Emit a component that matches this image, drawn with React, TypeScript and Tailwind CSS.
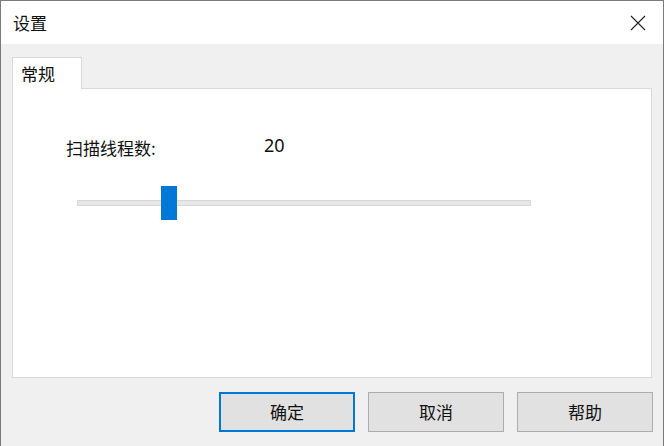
import React from "react";

export default function App() {
  const font = { fontFamily: '"Noto Sans CJK SC", "Noto Sans", sans-serif' };
  return (
    <div className="w-[665px] h-[446px] bg-white overflow-hidden" style={font}>
      <div className="w-[664px] h-[446px] border border-b-0 border-[#7a7a7a] flex flex-col">
        {/* title bar */}
        <div className="h-[43px] bg-white flex items-center justify-between pl-[12px] pr-[16px] shrink-0">
          <span className="text-[17px] text-[#111] leading-none">设置</span>
          <svg width="16" height="16" viewBox="0 0 16 16" className="mr-[1px]">
            <path d="M1 1 L15 15 M15 1 L1 15" stroke="#222" strokeWidth="1.1" fill="none" />
          </svg>
        </div>
        {/* body */}
        <div className="flex-1 bg-[#f0f0f0] pl-[11px] pt-[13px] flex flex-col">
          {/* tab */}
          <div className="flex">
            <div className="w-[70px] h-[32px] bg-white border border-b-0 border-[#d9d9d9] flex items-center pl-[8px] -mb-px relative z-10">
              <span className="text-[17px] text-[#111] leading-none">常规</span>
            </div>
          </div>
          {/* panel */}
          <div className="w-[640px] h-[290px] bg-white border border-[#d9d9d9] flex flex-col">
            <div className="flex items-center mt-[48px] h-[20px]">
              <span className="ml-[53px] text-[17px] text-[#111] leading-none w-[145px]">扫描线程数:</span>
              <span className="ml-[53px] -mt-[4px] text-[18px] text-[#111] leading-none" style={{ fontFamily: '"Noto Sans", sans-serif' }}>20</span>
            </div>
            <div className="relative ml-[64px] mt-[29px] w-[454px] h-[34px] flex items-center">
              <div className="w-full h-[6px] bg-[#e7e7e7] border border-[#d6d6d6]"></div>
              <div className="absolute left-[84px] top-0 w-[16px] h-[34px] bg-[#0078d7]"></div>
            </div>
          </div>
          {/* buttons */}
          <div className="flex mt-[14px] pl-[207px] gap-[13px]">
            <button className="w-[136px] h-[40px] bg-[#e1e1e1] border-2 border-[#0078d7] text-[17px] text-[#111] flex items-center justify-center">
              确定
            </button>
            <button className="w-[136px] h-[40px] bg-[#e1e1e1] border border-[#adadad] text-[17px] text-[#111] flex items-center justify-center">
              取消
            </button>
            <button className="w-[136px] h-[40px] bg-[#e1e1e1] border border-[#adadad] text-[17px] text-[#111] flex items-center justify-center">
              帮助
            </button>
          </div>
        </div>
      </div>
    </div>
  );
}
